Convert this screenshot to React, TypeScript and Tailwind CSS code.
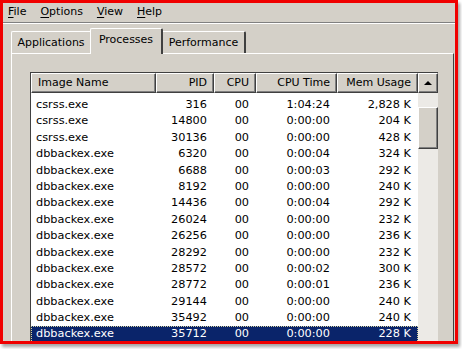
const rows: string[][] = [
  ['csrss.exe', '316', '00', '1:04:24', '2,828 K'],
  ['csrss.exe', '14800', '00', '0:00:00', '204 K'],
  ['csrss.exe', '30136', '00', '0:00:00', '428 K'],
  ['dbbackex.exe', '6320', '00', '0:00:04', '324 K'],
  ['dbbackex.exe', '6688', '00', '0:00:03', '292 K'],
  ['dbbackex.exe', '8192', '00', '0:00:00', '240 K'],
  ['dbbackex.exe', '14436', '00', '0:00:04', '292 K'],
  ['dbbackex.exe', '26024', '00', '0:00:00', '232 K'],
  ['dbbackex.exe', '26256', '00', '0:00:00', '236 K'],
  ['dbbackex.exe', '28292', '00', '0:00:00', '232 K'],
  ['dbbackex.exe', '28572', '00', '0:00:02', '300 K'],
  ['dbbackex.exe', '28772', '00', '0:00:01', '236 K'],
  ['dbbackex.exe', '29144', '00', '0:00:00', '240 K'],
  ['dbbackex.exe', '35492', '00', '0:00:00', '240 K'],
  ['dbbackex.exe', '35712', '00', '0:00:00', '228 K'],
];

const cols = 'grid grid-cols-[125px_58px_42px_81px_81px]';

function HeaderCell({ label, right }: { label: string; right?: boolean }) {
  return (
    <div
      className={`h-[20px] flex items-center px-[6px] whitespace-nowrap bg-[#d4d0c8] border-t border-l border-white border-r border-b border-r-[#404040] border-b-[#404040] shadow-[inset_-1px_-1px_0_#808080] ${
        right ? 'justify-end' : 'justify-start'
      }`}
    >
      {label}
    </div>
  );
}

function MenuItem({ first, rest }: { first: string; rest: string }) {
  return (
    <span>
      <span className="underline underline-offset-2">{first}</span>
      {rest}
    </span>
  );
}

export default function App() {
  return (
    <div className="w-[462px] h-[349px] bg-white overflow-hidden">
      <div
        className="w-[458px] h-[344px] border-[3px] border-[#f00000] shadow-[2px_3px_3px_rgba(0,0,0,0.35)] bg-[#d4d0c8] flex flex-col overflow-hidden text-[11px] text-black"
        style={{ fontFamily: '"DejaVu Sans", Tahoma, sans-serif' }}
      >
        {/* menu bar */}
        <div className="h-[19px] flex items-center gap-[14px] pl-[5px] text-[11px]">
          <MenuItem first="F" rest="ile" />
          <MenuItem first="O" rest="ptions" />
          <MenuItem first="V" rest="iew" />
          <MenuItem first="H" rest="elp" />
        </div>
        <div className="border-t border-[#808080] border-b border-b-white" />

        {/* tabs */}
        <div className="flex items-end pl-[8px] pt-[3px] h-[29px]">
          <div className="w-[79px] h-[22px] pt-[2px] flex items-center justify-center border-t border-l border-white rounded-tl-[2px]">
            Applications
          </div>
          <div className="relative z-10 -mb-px w-[73px] h-[26px] pb-[2px] flex items-center justify-center bg-[#d4d0c8] border-t border-l border-white border-r-2 border-r-[#404040] rounded-t-[2px]">
            Processes
          </div>
          <div className="w-[83px] h-[22px] pt-[2px] flex items-center justify-center border-t border-white border-r-2 border-r-[#404040] rounded-tr-[2px]">
            Performance
          </div>
        </div>

        {/* panel */}
        <div className="flex-1 ml-[8px] mr-[1px] border-t border-l border-white border-r border-r-[#404040] pt-[18px] pl-[18px] pr-[15px] overflow-hidden">
          <div className="h-[300px] border-t border-l border-[#404040] flex bg-white">
            <div className="w-[387px] flex flex-col">
              <div className={cols}>
                <HeaderCell label="Image Name" />
                <HeaderCell label="PID" right />
                <HeaderCell label="CPU" right />
                <HeaderCell label="CPU Time" right />
                <HeaderCell label="Mem Usage" right />
              </div>
              <div className="pt-[4px] text-[11.3px]">
                {rows.map((r, i) => {
                  const sel = i === 14;
                  return (
                    <div
                      key={i}
                      className={`${cols} h-[16.4px] items-center whitespace-nowrap ${
                        sel ? 'bg-[#0a246a] text-white outline-1 outline-dotted outline-[#d8d4a0] -outline-offset-1' : ''
                      }`}
                    >
                      <div className="pl-[5px]">{r[0]}</div>
                      <div className="text-right pr-[7px]">{r[1]}</div>
                      <div className="text-right pr-[7px]">{r[2]}</div>
                      <div className="text-right pr-[7px]">{r[3]}</div>
                      <div className="text-right pr-[7px]">{r[4]}</div>
                    </div>
                  );
                })}
              </div>
            </div>

            {/* scrollbar */}
            <div className="w-[20px] flex flex-col bg-[#eceae6]">
              <div className="h-[20px] flex items-center justify-center bg-[#d4d0c8] border-t border-l border-white border-r border-b border-r-[#404040] border-b-[#404040] shadow-[inset_-1px_-1px_0_#808080]">
                <svg width="8" height="5" viewBox="0 0 8 5">
                  <path d="M4 0 L8 4 L0 4 Z" fill="#000" />
                </svg>
              </div>
              <div className="h-[14px]" />
              <div className="h-[42px] bg-[#d4d0c8] border-t border-l border-white border-r border-b border-r-[#404040] border-b-[#404040] shadow-[inset_-1px_-1px_0_#808080]" />
            </div>
          </div>
        </div>
      </div>
    </div>
  );
}
